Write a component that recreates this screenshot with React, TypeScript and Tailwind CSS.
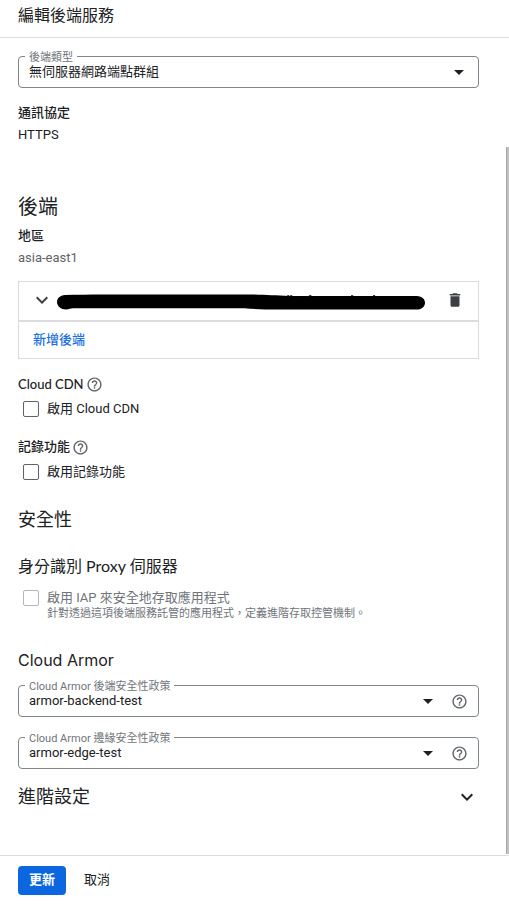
import React, { useId } from 'react';
import { MdArrowDropDown, MdDelete, MdExpandMore, MdHelpOutline } from 'react-icons/md';

interface SelectFieldProps {
  label: string;
  value: string;
  help?: boolean;
  className?: string;
}

const HelpButton: React.FC<{ topic: string }> = ({ topic }) => (
  <button type="button" aria-label={topic} className="shrink-0 text-[#5f6368]">
    <MdHelpOutline className="w-[17px] h-[17px]" />
  </button>
);

const SelectField: React.FC<SelectFieldProps> = ({ label, value, help, className }) => {
  const id = useId();

  return (
    <div className={`relative flex items-center h-8 border border-[#80868b] rounded ${className ?? ''}`}>
      <label htmlFor={id} className="absolute left-1.5 -top-[5px] z-10 px-1 bg-white text-[11px] leading-3 text-[#70757a]">
        {label}
      </label>
      <div className="relative flex-1 h-full">
        <select id={id} defaultValue={value} className="appearance-none w-full h-full pl-2.5 pr-8 bg-transparent text-[13px] text-[#202124]">
          <option value={value}>{value}</option>
        </select>
        <MdArrowDropDown className={`absolute top-[3px] w-6 h-6 pointer-events-none text-[#202124] ${help ? 'right-0' : 'right-[7px]'}`} />
      </div>
      {help && (
        <div className="flex pl-[11px] pr-2.5">
          <HelpButton topic={label} />
        </div>
      )}
    </div>
  );
};

interface CheckFieldProps {
  label: string;
  hint?: string;
  disabled?: boolean;
  className?: string;
}

const CheckField: React.FC<CheckFieldProps> = ({ label, hint, disabled, className }) => {
  const id = useId();

  return (
    <div className={`flex items-start gap-2 pl-[5px] ${className ?? ''}`}>
      <input
        id={id}
        type="checkbox"
        disabled={disabled}
        className="appearance-none shrink-0 w-4 h-4 border border-[#5f6368] rounded-xs bg-white checked:bg-[#0b66e0] disabled:border-[#b4b7ba]"
      />
      <div className={disabled ? 'text-[#70757a]' : ''}>
        <label htmlFor={id} className="block leading-4">{label}</label>
        {hint && <p className="text-[11px] leading-4">{hint}</p>}
      </div>
    </div>
  );
};

// hand-drawn marker stroke that hides the backend name
const Redaction = () => (
  <svg className="flex-1 min-w-0 h-[18px] mt-1" viewBox="0 0 369 18" preserveAspectRatio="none" aria-hidden="true">
    <path
      d="M8 2C30 1 60 1.500 100 1.500h95c14 .3 24 1 38 1.500h128c5 .3 8 3.200 8 6.700s-3 6.800-8 6.800H230c-15 .4-30-.3-42-1.200H16c-2 0-4 1.200-7 1.200-5 0-9-3.500-9-7.500 0-3.600 3-6.500 8-7z"
      fill="#000"
    />
    <path d="M231 3l1-1 1 1.500M234 3l1-1 1 1.500M252 3.500l1.500-1h1.500M295 3l1-1 1 1M317 3l1-1 1 1" fill="none" stroke="#202124" strokeWidth="1" />
  </svg>
);

export default function App() {
  return (
    <div className="flex flex-col min-h-screen bg-white text-[13px] leading-5 text-[#202124] font-[Roboto,'Noto_Sans_CJK_TC',sans-serif]">
      <header className="px-[18px] pt-1 pb-[9px] border-b border-[#dadce0]">
        <h1 className="text-base">編輯後端服務</h1>
      </header>

      <main className="relative flex-1 pt-[18px] pl-[18px] pr-[30px] pb-11">
        <SelectField label="後端類型" value="無伺服器網路端點群組" />

        <h4 className="mt-[15px] font-medium">通訊協定</h4>
        <p className="mt-0.5">HTTPS</p>

        <h2 className="mt-12 text-xl leading-7">後端</h2>
        <h4 className="mt-[5px] font-medium">地區</h4>
        <p className="mt-0.5 text-[#5f6368]">asia-east1</p>

        <div className="mt-[13px] border border-[#dadce0]">
          <div className="box-content flex items-center h-9 pl-[11px] pr-3.5 pb-0.5 border-b-2 border-[#dadce0]">
            <button type="button" aria-label="展開" className="mr-[3px] text-[#3c4043]">
              <MdExpandMore className="w-6 h-6" />
            </button>
            <Redaction />
            <button type="button" aria-label="刪除" className="ml-[21px] text-[#3c4043]">
              <MdDelete className="w-[18px] h-[18px]" />
            </button>
          </div>
          <div className="flex items-center h-9 pl-3.5">
            <button type="button" className="font-medium text-[#1a6fe0]">新增後端</button>
          </div>
        </div>

        <div className="flex items-center gap-0.5 mt-[15px]">
          <h4 className="font-medium font-[Lato,'Noto_Sans_CJK_TC',sans-serif]">Cloud CDN</h4>
          <HelpButton topic="Cloud CDN" />
        </div>
        <CheckField className="mt-[7px]" label="啟用 Cloud CDN" />

        <div className="flex items-center gap-0.5 mt-5">
          <h4 className="font-medium">記錄功能</h4>
          <HelpButton topic="記錄功能" />
        </div>
        <CheckField className="mt-[7px]" label="啟用記錄功能" />

        <h2 className="mt-[26px] text-lg leading-7">安全性</h2>

        <h3 className="mt-5 text-base leading-6 font-[Lato,'Noto_Sans_CJK_TC',sans-serif]">身分識別 Proxy 伺服器</h3>
        <CheckField
          className="mt-3"
          label="啟用 IAP 來安全地存取應用程式"
          hint="針對透過這項後端服務託管的應用程式，定義進階存取控管機制。"
          disabled
        />

        <h3 className="mt-[26px] text-base leading-6 font-[Inter,'Noto_Sans_CJK_TC',sans-serif]">Cloud Armor</h3>
        <SelectField className="mt-[13px]" label="Cloud Armor 後端安全性政策" value="armor-backend-test" help />
        <SelectField className="mt-5" label="Cloud Armor 邊緣安全性政策" value="armor-edge-test" help />

        <button type="button" className="flex items-center justify-between w-full mt-3.5 text-left">
          <span className="text-lg leading-7">進階設定</span>
          <MdExpandMore className="w-6 h-6" />
        </button>

        <div className="absolute right-0 top-[109px] bottom-px w-[3px] bg-[#c1c1c1] border-l border-[#a8a8a8]" />
      </main>

      <footer className="flex items-center gap-2 px-[18px] pt-[10px] pb-[9px] border-t border-[#dadce0]">
        <button type="button" className="h-[29px] px-[11px] pb-0.5 rounded bg-[#0b66e0] font-bold text-white">更新</button>
        <button type="button" className="h-[29px] px-2.5 pb-0.5">取消</button>
      </footer>
    </div>
  );
}
